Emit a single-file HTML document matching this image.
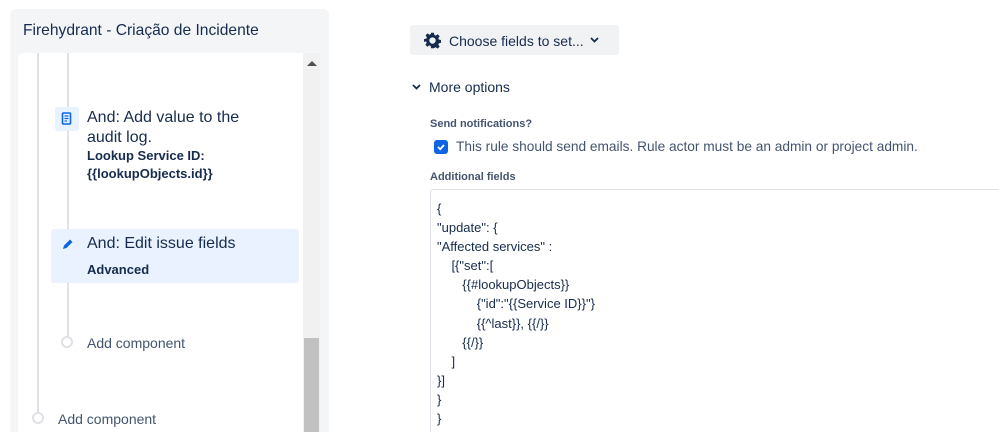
<!DOCTYPE html>
<html><head><meta charset="utf-8"><style>
*{margin:0;padding:0;box-sizing:border-box}
html,body{width:999px;height:432px;overflow:hidden}
body{background:#fff;font-family:"Liberation Sans",sans-serif;color:#172b4d;position:relative}
.a{position:absolute;white-space:nowrap}
</style></head><body>
<div class="a" style="left:10px;top:9px;width:319px;height:440px;background:#f4f5f7;border-radius:6px"></div>
<div class="a" style="left:23px;top:22px;font-size:15.6px;color:#172b4d">Firehydrant - Criação de Incidente</div>
<div class="a" style="left:18px;top:53px;width:286px;height:400px;background:#fff;border-radius:6px 0 0 0"></div>
<div class="a" style="left:303px;top:53px;width:17px;height:390px;background:#f1f1f1"></div>
<div class="a" style="left:304px;top:338px;width:15px;height:100px;background:#c1c1c1"></div>
<div class="a" style="left:307px;top:61px;width:0;height:0;border-left:5px solid transparent;border-right:5px solid transparent;border-bottom:5px solid #505050"></div>
<div class="a" style="left:37px;top:53px;width:2px;height:360px;background:#dfe1e6"></div>
<div class="a" style="left:67px;top:53px;width:2px;height:284px;background:#dfe1e6"></div>
<div class="a" style="left:55px;top:107px;width:24px;height:24px;background:#e9f2ff;border-radius:3px"></div>
<svg class="a" style="left:61px;top:112px" width="12" height="14" viewBox="0 0 12 14"><rect x="1.5" y="1" width="8" height="11" rx="1" fill="none" stroke="#0c66e4" stroke-width="1.6"/><path d="M3.5 4h4M3.5 6.5h4M3.5 9h2.5" stroke="#0c66e4" stroke-width="1.2"/></svg>
<div class="a" style="left:87px;top:108px;font-size:16px;line-height:20px">And: Add value to the<br>audit log.</div>
<div class="a" style="left:87px;top:147px;font-size:13px;font-weight:bold;line-height:18px">Lookup Service ID:<br>{{lookupObjects.id}}</div>
<div class="a" style="left:51px;top:229px;width:248px;height:54px;background:#e9f2fe;border-radius:3px"></div>
<svg class="a" style="left:61px;top:238px" width="13" height="13" viewBox="0 0 13 13"><path d="M2 11l1-3.5 6-6 2.5 2.5-6 6z" fill="#0c66e4"/></svg>
<div class="a" style="left:87px;top:235px;font-size:16px">And: Edit issue fields</div>
<div class="a" style="left:87px;top:262px;font-size:13px;font-weight:bold">Advanced</div>
<div class="a" style="left:61px;top:336px;width:12px;height:12px;border:2px solid #dfe1e6;border-radius:50%;background:#fff"></div>
<div class="a" style="left:87px;top:335px;font-size:14px;color:#44546f">Add component</div>
<div class="a" style="left:32px;top:412px;width:12px;height:12px;border:2px solid #dfe1e6;border-radius:50%;background:#fff"></div>
<div class="a" style="left:58px;top:411px;font-size:14px;color:#44546f">Add component</div>

<div class="a" style="left:410px;top:25px;width:209px;height:30px;background:#f1f2f4;border-radius:3px"></div>
<svg class="a" style="left:424px;top:32px" width="17" height="17" viewBox="0 0 24 24"><path fill="#172b4d" d="M10 1h4l.6 3.2 2 .9 2.7-1.9 2.8 2.8-1.9 2.7.9 2 3.2.6v4l-3.2.6-.9 2 1.9 2.7-2.8 2.8-2.7-1.9-2 .9L14 23h-4l-.6-3.2-2-.9-2.7 1.9-2.8-2.8 1.9-2.7-.9-2L0 14v-4l3.2-.6.9-2L2.2 4.7 5 1.9l2.7 1.9 2-.9zM12 7.5a4.5 4.5 0 100 9 4.5 4.5 0 000-9z"/></svg>
<div class="a" style="left:449px;top:33px;font-size:14px">Choose fields to set...</div>
<svg class="a" style="left:590px;top:37px" width="9" height="6" viewBox="0 0 9 6"><path d="M1 1l3.5 3.5L8 1" stroke="#172b4d" stroke-width="1.8" fill="none"/></svg>
<svg class="a" style="left:412px;top:84px" width="9" height="6" viewBox="0 0 9 6"><path d="M1 1l3.5 3.5L8 1" stroke="#172b4d" stroke-width="1.8" fill="none"/></svg>
<div class="a" style="left:429px;top:79px;font-size:14px">More options</div>
<div class="a" style="left:430px;top:118px;font-size:11px;font-weight:bold;color:#44546f">Send notifications?</div>
<div class="a" style="left:434px;top:140px;width:14px;height:14px;background:#0c66e4;border-radius:3px"></div>
<svg class="a" style="left:436px;top:142px" width="10" height="10" viewBox="0 0 10 10"><path d="M2 5l2.2 2.2L8 3" stroke="#fff" stroke-width="1.8" fill="none"/></svg>
<div class="a" style="left:456px;top:139px;font-size:13.7px;color:#44546f">This rule should send emails. Rule actor must be an admin or project admin.</div>
<div class="a" style="left:430px;top:171px;font-size:11px;font-weight:bold;color:#44546f">Additional fields</div>
<div class="a" style="left:430px;top:189px;width:580px;height:260px;border:1px solid #dfe1e6;border-radius:3px"></div>
<pre class="a" style="white-space:pre;left:437px;top:199px;font-family:'Liberation Sans',sans-serif;font-size:13px;line-height:19.1px;color:#172b4d">{
"update": {
"Affected services" :
    [{"set":[
       {{#lookupObjects}}
           {"id":"{{Service ID}}"}
           {{^last}}, {{/}}
       {{/}}
    ]
}]
}
}</pre>
</body></html>
